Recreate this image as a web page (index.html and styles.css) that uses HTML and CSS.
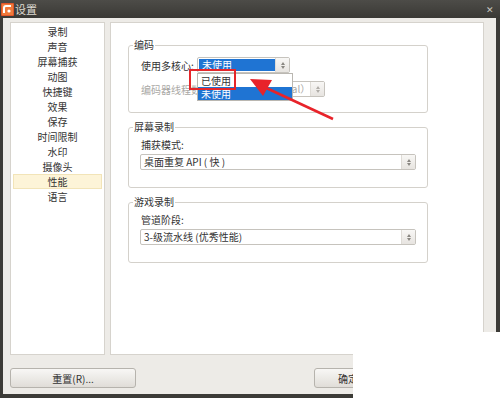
FILE: index.html
```html
<!DOCTYPE html>
<html>
    <head>
        <meta charset="utf-8">
        <title>设置</title>
        <link rel="stylesheet" href="styles.css">
    </head>
    <body>
        <div class="window">
            <div class="titlebar">
                <svg class="app-icon" width="13" height="13" viewBox="0 0 13 13">
                    <rect x="0" y="0" width="13" height="13" rx="1" fill="#e2562a" />
                    <rect x="1" y="1" width="11" height="11" fill="#f07a3a" />
                    <path d="M3 10 V5 Q3 3 5 3 H10" stroke="#fff" stroke-width="2" fill="none" />
                    <circle cx="8" cy="8" r="1.6" fill="#fff" />
                </svg>
                <span class="title">设置</span>
                <span class="close">✕</span>
            </div>
            <div class="client">
                <div class="panels">
                    <ul class="nav">
                        <li>录制</li>
                        <li>声音</li>
                        <li>屏幕捕获</li>
                        <li>动图</li>
                        <li>快捷键</li>
                        <li>效果</li>
                        <li>保存</li>
                        <li>时间限制</li>
                        <li>水印</li>
                        <li>摄像头</li>
                        <li class="active">性能</li>
                        <li>语言</li>
                    </ul>
                    <div class="page">
                        <fieldset class="group group-encode">
                            <legend>编码</legend>
                            <div class="row">
                                <span class="row-label">使用多核心:</span>
                                <div class="combo combo-cores selected">
                                    <span class="combo-text">未使用</span>
                                    <span class="combo-btn">
                                        <svg width="4" height="7" viewBox="0 0 4 7"><path d="M0 3 L2 0 L4 3 Z M0 4 L2 7 L4 4 Z" fill="#8a8782" /></svg>
                                    </span>
                                    <ul class="popup">
                                        <li>已使用</li>
                                        <li class="hl">未使用</li>
                                    </ul>
                                </div>
                            </div>
                            <div class="row disabled">
                                <span class="row-label row-label-wide">编码器线程数:</span>
                                <div class="combo combo-threads">
                                    <span class="combo-text">(Normal）</span>
                                    <span class="combo-btn">
                                        <svg width="4" height="7" viewBox="0 0 4 7"><path d="M0 3 L2 0 L4 3 Z M0 4 L2 7 L4 4 Z" fill="#b0ada8" /></svg>
                                    </span>
                                </div>
                            </div>
                        </fieldset>

                        <fieldset class="group">
                            <legend>屏幕录制</legend>
                            <div class="field-label">捕获模式:</div>
                            <div class="combo combo-wide">
                                <span class="combo-text">桌面重复 API ( 快 )</span>
                                <span class="combo-btn">
                                    <svg width="4" height="7" viewBox="0 0 4 7"><path d="M0 3 L2 0 L4 3 Z M0 4 L2 7 L4 4 Z" fill="#8a8782" /></svg>
                                </span>
                            </div>
                        </fieldset>

                        <fieldset class="group">
                            <legend>游戏录制</legend>
                            <div class="field-label">管道阶段:</div>
                            <div class="combo combo-wide">
                                <span class="combo-text">3-级流水线 (优秀性能)</span>
                                <span class="combo-btn">
                                    <svg width="4" height="7" viewBox="0 0 4 7"><path d="M0 3 L2 0 L4 3 Z M0 4 L2 7 L4 4 Z" fill="#8a8782" /></svg>
                                </span>
                            </div>
                        </fieldset>
                    </div>
                </div>
                <div class="buttons">
                    <button class="btn btn-reset" type="button">重置(R)...</button>
                    <button class="btn btn-ok" type="button">确定(O)</button>
                    <button class="btn" type="button">取消(C)</button>
                </div>
            </div>

            <!-- annotation drawn over the screenshot -->
            <div class="mark-box"></div>
            <svg class="mark-arrow" width="100" height="56" viewBox="240 68 100 56">
                <line x1="333" y1="119" x2="262" y2="86" stroke="#e8232a" stroke-width="2.5" />
                <polygon points="250,79 272,80 263,96" fill="#e8232a" />
            </svg>
            <div class="crop"></div>
        </div>
    </body>
</html>
```

FILE: styles.css
```css
* {
    box-sizing: border-box;
}

body {
    margin: 0;
    font-family: 'Noto Sans CJK SC', 'Noto Sans', sans-serif;
    font-size: 10px;
    color: #333;
}

.window {
    position: relative;
    width: 500px;
    height: 398px;
    background: #3c3b37;
    display: flex;
    flex-direction: column;
}

.titlebar {
    height: 18px;
    display: flex;
    align-items: center;
    padding: 0 6px 0 1px;
    background: linear-gradient(#4d4c48, #3a3935);
    color: #dfdbd2;
}

.app-icon {
    margin-right: 1px;
}

.title {
    font-size: 11px;
    line-height: 14px;
}

.close {
    margin-left: auto;
    font-size: 9px;
    color: #c9c6bf;
}

.client {
    flex: 1;
    margin: 0 4px 4px 3px;
    padding: 4px 12px 6px 7px;
    background: #edebe7;
    display: flex;
    flex-direction: column;
}

.panels {
    flex: 1;
    display: flex;
    gap: 5px;
}

.nav {
    width: 95px;
    margin: 0;
    padding: 1px 2px;
    list-style: none;
    background: #fff;
    border: 1px solid #d6d3cd;
}

.nav li {
    height: 15px;
    line-height: 13px;
    text-align: center;
    border: 1px solid transparent;
}

.nav li.active {
    background: #fdf4d8;
    border-color: #f2e4b8;
}

.page {
    flex: 1;
    background: #fff;
    border: 1px solid #d6d3cd;
    padding: 16px 0 0 17px;
    display: flex;
    flex-direction: column;
    align-items: flex-start;
    gap: 8px;
}

.group {
    width: 300px;
    margin: 0;
    padding: 6px 11px 17px;
    border: 1px solid #d4d1cb;
    border-radius: 3px;
}

.group legend {
    margin-left: -7px;
    padding: 0 1px;
    line-height: 12px;
}

.group-encode {
    padding-bottom: 15px;
}

.row {
    display: flex;
    align-items: center;
    height: 16px;
}

.row + .row {
    margin-top: 8px;
}

.row-label {
    width: 57px;
    padding-left: 1px;
    white-space: nowrap;
}

.row-label-wide {
    width: 118px;
}

.disabled {
    color: #a9a8a5;
}

.field-label {
    line-height: 12px;
    margin-bottom: 3px;
    padding-left: 1px;
}

.combo {
    position: relative;
    display: flex;
    height: 16px;
    border: 1px solid #c6c3bd;
    border-radius: 2px;
    background: #fff;
}

.combo-text {
    flex: 1;
    padding-left: 3px;
    line-height: 14px;
    white-space: nowrap;
    overflow: hidden;
}

.combo-btn {
    width: 14px;
    border-left: 1px solid #dedbd6;
    background: linear-gradient(#f8f7f5, #e7e4e0);
    display: flex;
    align-items: center;
    justify-content: center;
}

.combo-cores {
    width: 93px;
}

.combo-threads {
    width: 67px;
}

.combo-wide {
    width: 276px;
}

.selected .combo-text {
    margin: 1px 0 1px 1px;
    line-height: 12px;
    background: #1f74d3;
    color: #fff;
}

.popup {
    position: absolute;
    left: -1px;
    top: 15px;
    z-index: 2;
    width: 96px;
    margin: 0;
    padding: 0;
    list-style: none;
    background: #fff;
    border: 1px solid #bab7b1;
    color: #333;
}

.popup li {
    height: 13px;
    line-height: 13px;
    padding-left: 3px;
}

.popup li.hl {
    background: #1f74d3;
    color: #fff;
}

.buttons {
    display: flex;
    gap: 6px;
    margin-top: 13px;
    height: 20px;
}

.btn {
    width: 82px;
    height: 20px;
    padding: 0;
    border: 1px solid #b6b3ad;
    border-radius: 3px;
    background: linear-gradient(#f8f7f5, #e0ddd8);
    font: inherit;
    color: #333;
}

.btn-reset {
    width: 126px;
}

.btn-ok {
    margin-left: auto;
}

.mark-box {
    position: absolute;
    left: 189px;
    top: 69px;
    width: 47px;
    height: 21px;
    border: 2px solid #e5262a;
    z-index: 3;
}

.mark-arrow {
    position: absolute;
    left: 240px;
    top: 68px;
    z-index: 3;
}

.crop {
    position: absolute;
    left: 353px;
    top: 332px;
    right: 0;
    bottom: 0;
    background: #fff;
    z-index: 4;
}
```
